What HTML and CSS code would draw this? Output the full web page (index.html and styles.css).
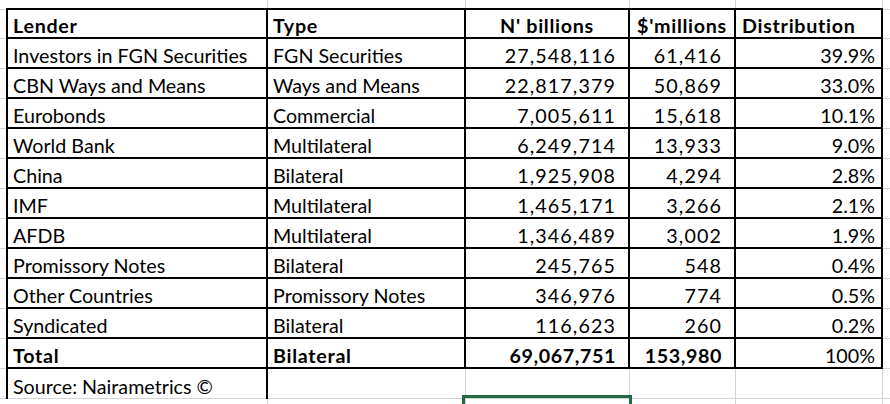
FILE: index.html
```html
<!DOCTYPE html>
<html lang="en">
<head>
<meta charset="utf-8">
<title>Nigeria public debt by lender</title>
<link rel="stylesheet" href="styles.css">
</head>
<body>
<table class="sheet">
  <colgroup>
    <col class="c-stub-l">
    <col class="c-lender">
    <col class="c-type">
    <col class="c-ngn">
    <col class="c-usd">
    <col class="c-dist">
    <col class="c-stub-r">
  </colgroup>
  <tbody>
    <tr class="r-top">
      <td class="stub"></td><td class="g"></td><td class="g"></td><td class="g"></td><td class="g"></td><td class="g"></td><td class="stub"></td>
    </tr>
    <tr class="r-head">
      <td class="stub"></td>
      <td class="b bold">Lender</td>
      <td class="b bold">Type</td>
      <td class="b bold ctr">N' billions</td>
      <td class="b bold ctr">$'millions</td>
      <td class="b bold dist-h">Distribution</td>
      <td class="stub"></td>
    </tr>
    <tr><td class="stub"></td><td class="b">Investors in FGN Securities</td><td class="b">FGN Securities</td><td class="b num pr">27,548,116</td><td class="b num pr">61,416</td><td class="b num pc">39.9%</td><td class="stub"></td></tr>
    <tr><td class="stub"></td><td class="b">CBN Ways and Means</td><td class="b">Ways and Means</td><td class="b num pr">22,817,379</td><td class="b num pr">50,869</td><td class="b num pc">33.0%</td><td class="stub"></td></tr>
    <tr><td class="stub"></td><td class="b">Eurobonds</td><td class="b">Commercial</td><td class="b num pr">7,005,611</td><td class="b num pr">15,618</td><td class="b num pc">10.1%</td><td class="stub"></td></tr>
    <tr><td class="stub"></td><td class="b">World Bank</td><td class="b">Multilateral</td><td class="b num pr">6,249,714</td><td class="b num pr">13,933</td><td class="b num pc">9.0%</td><td class="stub"></td></tr>
    <tr><td class="stub"></td><td class="b">China</td><td class="b">Bilateral</td><td class="b num pr">1,925,908</td><td class="b num pr">4,294</td><td class="b num pc">2.8%</td><td class="stub"></td></tr>
    <tr><td class="stub"></td><td class="b">IMF</td><td class="b">Multilateral</td><td class="b num pr">1,465,171</td><td class="b num pr">3,266</td><td class="b num pc">2.1%</td><td class="stub"></td></tr>
    <tr><td class="stub"></td><td class="b">AFDB</td><td class="b">Multilateral</td><td class="b num pr">1,346,489</td><td class="b num pr">3,002</td><td class="b num pc">1.9%</td><td class="stub"></td></tr>
    <tr><td class="stub"></td><td class="b">Promissory Notes</td><td class="b">Bilateral</td><td class="b num pr">245,765</td><td class="b num pr">548</td><td class="b num pc">0.4%</td><td class="stub"></td></tr>
    <tr><td class="stub"></td><td class="b">Other Countries</td><td class="b">Promissory Notes</td><td class="b num pr">346,976</td><td class="b num pr">774</td><td class="b num pc">0.5%</td><td class="stub"></td></tr>
    <tr><td class="stub"></td><td class="b">Syndicated</td><td class="b">Bilateral</td><td class="b num pr">116,623</td><td class="b num pr">260</td><td class="b num pc">0.2%</td><td class="stub"></td></tr>
    <tr><td class="stub"></td><td class="b bold">Total</td><td class="b bold">Bilateral</td><td class="b num pr bold">69,067,751</td><td class="b num pr bold">153,980</td><td class="b num pc">100%</td><td class="stub"></td></tr>
    <tr class="r-source">
      <td class="stub"></td>
      <td class="src">Source: Nairametrics ©</td>
      <td class="g"></td>
      <td class="g"></td><td class="g"></td><td class="g"></td><td class="stub"></td>
    </tr>
    <tr class="r-bottom">
      <td class="stub"></td><td class="g"></td><td class="g"></td><td class="g sel"></td><td class="g"></td><td class="g"></td><td class="stub"></td>
    </tr>
  </tbody>
</table>
</body>
</html>
```
FILE: styles.css
```css
html, body {
  margin: 0;
  padding: 0;
  background: #ffffff;
}

body {
  width: 890px;
  height: 404px;
  overflow: hidden;
  font-family: Lato, "Open Sans", "Liberation Sans", sans-serif;
  font-size: 19.7px;
  color: #000000;
}

.sheet {
  border-collapse: collapse;
  table-layout: fixed;
  width: 890px;
}

.c-stub-l { width: 7px; }
.c-lender { width: 260px; }
.c-type { width: 198px; }
.c-ngn { width: 164px; }
.c-usd { width: 106px; }
.c-dist { width: 147px; }
.c-stub-r { width: 8px; }

.sheet td {
  padding: 0 5px 1px 5px;
  height: 30px;
  box-sizing: border-box;
  vertical-align: bottom;
  white-space: nowrap;
  overflow: visible;
  line-height: 20px;
}

.sheet .r-top td { height: 9px; padding: 0; }
.sheet .r-head td { height: 29px; }
.sheet .r-bottom td { height: 6px; padding: 0; }

.sheet td.stub {
  border-bottom: 1px solid #d4d4d4;
  padding: 0;
}

.g {
  border-right: 1px solid #d4d4d4;
  border-bottom: 1px solid #d4d4d4;
}

.b {
  border: 2px solid #000000;
}

.src {
  border-left: 2px solid #000000;
  border-right: 2px solid #000000;
  border-top: 2px solid #000000;
  border-bottom: 1px solid #d4d4d4;
}

.bold {
  font-weight: 700;
  letter-spacing: 0.7px;
}
.ctr { text-align: center; }
.num { text-align: right; }

.sheet td.pr {
  padding-right: 12px;
  letter-spacing: 1.1px;
}
.sheet td.pr.bold {
  letter-spacing: 0.6px;
}
.sheet td.pc {
  padding-right: 6px;
}
.sheet td.dist-h {
  padding-left: 6px;
}

.sel {
  outline: 3px solid #1f6b41;
  outline-offset: 0;
}
```
